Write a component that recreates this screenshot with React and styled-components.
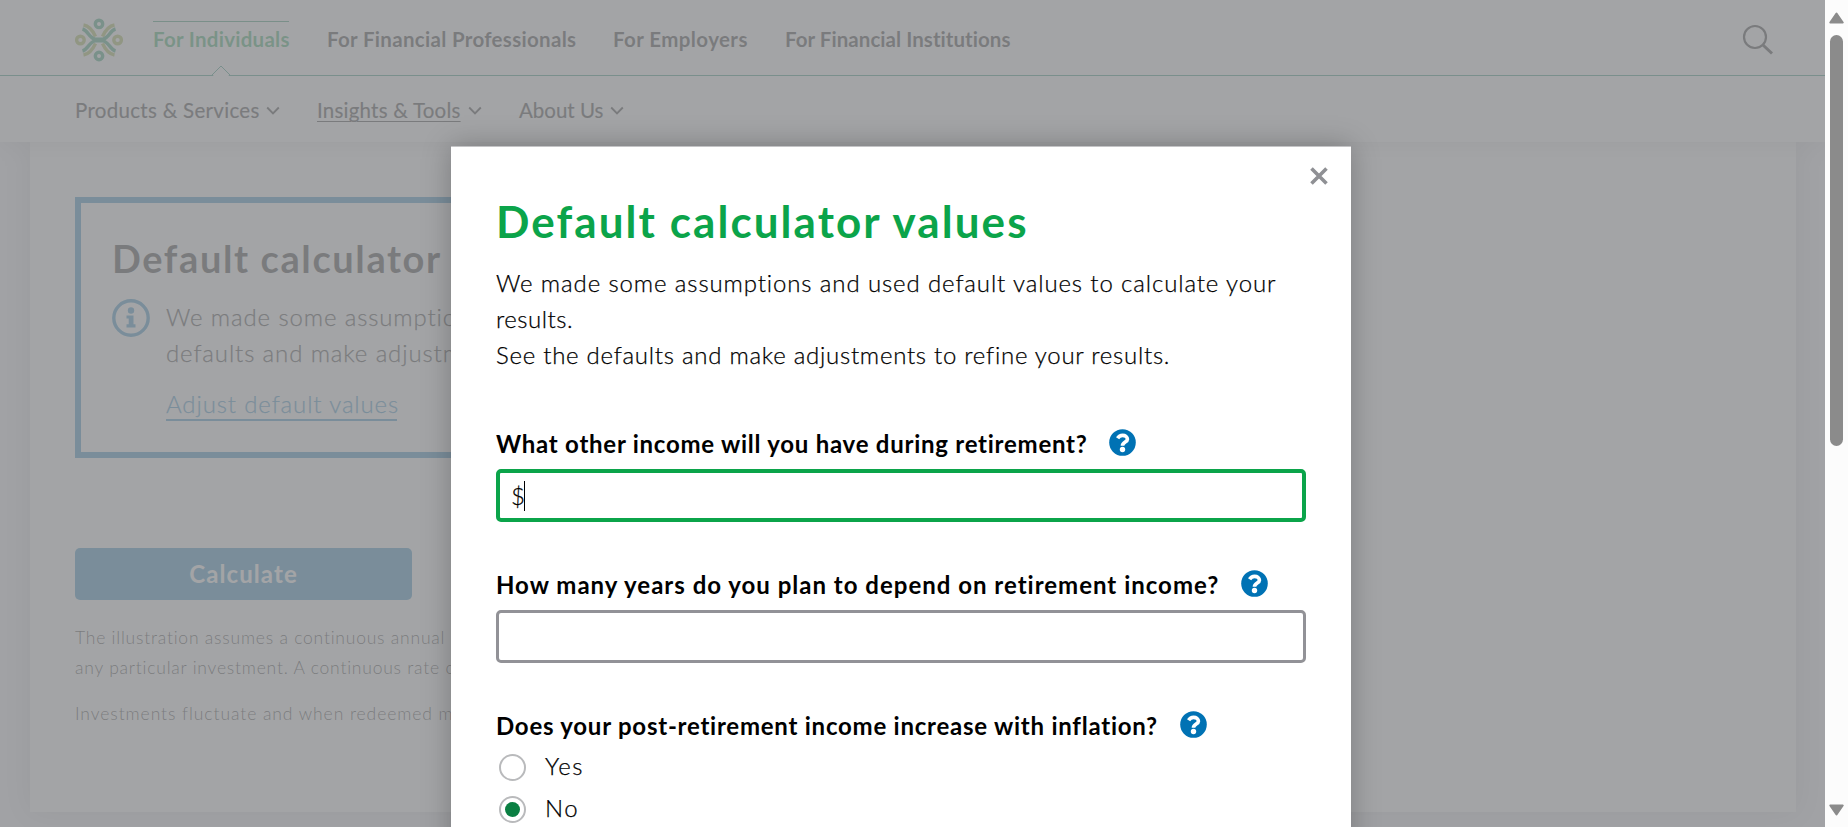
import React from 'react';
import styled, { createGlobalStyle, css } from 'styled-components';

const GlobalStyle = createGlobalStyle`
  * { box-sizing: border-box; }
  body {
    margin: 0;
    overflow: hidden;
    font-family: Lato, "Open Sans", sans-serif;
    color: #000;
  }
  h1, h2, p { margin: 0; }
`;

const bodyText = css`
  font-size: 24px;
  font-weight: 300;
  -webkit-text-stroke: 0.25px currentColor;
`;

const Screen = styled.div`
  display: flex;
  height: 827px;
  width: 1848px;
`;

const Viewport = styled.div`
  position: relative;
  width: 1825px;
  height: 827px;
  overflow: hidden;
  background: #f0f0f6;
`;

const Header = styled.header`
  position: relative;
  z-index: 1;
  height: 142px;
  background: #fff;
  box-shadow: 0 0 24px rgba(0, 0, 0, 0.2);
`;

const TopBar = styled.div`
  display: flex;
  align-items: flex-start;
  height: 76px;
  padding: 18px 51px 0 75px;
  border-bottom: 1px solid #007a5c;
`;

const LogoMark = styled.svg`
  width: 48px;
  height: 44px;
  margin-right: 30px;
`;

const TopLink = styled.a`
  position: relative;
  margin: 9px 38px 0 0;
  width: ${(p) => p.$width}px;
  white-space: nowrap;
  font-size: 20.5px;
  line-height: 24px;
  font-weight: 700;
  letter-spacing: ${(p) => p.$spacing}px;
`;

const ActiveTopLink = styled(TopLink)`
  margin-top: 3px;
  padding-top: 5px;
  border-top: 1px solid #007a4a;
  color: #00963f;
`;

const Notch = styled.svg`
  position: absolute;
  left: 58px;
  top: 43px;
  width: 20px;
  height: 12px;
`;

const SearchIcon = styled.svg`
  width: 32px;
  height: 32px;
  margin: 6px 0 0 auto;
`;

const SubNav = styled.nav`
  display: flex;
  padding: 20px 75px 0;
`;

const SubLink = styled.a`
  display: flex;
  align-items: center;
  width: ${(p) => p.$width}px;
  height: 28px;
  font-size: 20.5px;
  line-height: 28px;
  letter-spacing: ${(p) => p.$spacing}px;
  white-space: nowrap;
  -webkit-text-stroke: 0.2px currentColor;
`;

const SubLabel = styled.span`
  width: ${(p) => p.$width}px;
  text-decoration: ${(p) => (p.$active ? 'underline' : 'none')};
  text-decoration-thickness: 1px;
  text-underline-offset: 3px;
`;

const Chevron = styled.svg`
  width: 14px;
  height: 9px;
  margin-left: 7px;
`;

const Card = styled.main`
  width: 1766px;
  height: 670px;
  margin-left: 30px;
  padding: 55px 45px 0;
  background: #fff;
  box-shadow: 0 0 28px rgba(0, 0, 0, 0.2);
`;

const InfoBox = styled.section`
  width: 900px;
  height: 261px;
  padding: 31px 30px 0 31px;
  border: 6px solid #0072b4;
`;

const InfoTitle = styled.h2`
  font-size: 38px;
  line-height: 48px;
  font-weight: 700;
  letter-spacing: 1.6px;
  white-space: nowrap;
`;

const InfoRow = styled.div`
  display: flex;
  gap: 16px;
  margin-top: 17px;
`;

const InfoIcon = styled.svg`
  width: 38px;
  height: 38px;
`;

const InfoText = styled.div`
  ${bodyText}
  line-height: 36px;
  letter-spacing: 0.87px;
  white-space: nowrap;
`;

const AdjustLink = styled.a`
  display: block;
  margin-top: 15px;
  height: 35px;
  width: 231px;
  border-bottom: 2px solid #0072b4;
  color: #0072b4;
`;

const CalculateButton = styled.button`
  display: block;
  width: 337px;
  height: 52px;
  margin-top: 90px;
  padding: 0;
  border: 0;
  border-radius: 5px;
  background: #0072b4;
  color: #fff;
  font: 700 24px/52px Lato, sans-serif;
  letter-spacing: 1.1px;
`;

const Disclosure = styled.p`
  margin-top: ${(p) => p.$gap}px;
  font-size: 17.5px;
  line-height: 30px;
  font-weight: 300;
  letter-spacing: ${(p) => p.$spacing}px;
  white-space: nowrap;
`;

const Overlay = styled.div`
  position: absolute;
  inset: 0;
  z-index: 2;
  display: flex;
  align-items: flex-start;
  padding: 146px 0 0 451px;
  background: rgba(145, 147, 149, 0.84);
`;

const Dialog = styled.div`
  position: relative;
  flex: none;
  width: 900px;
  height: 900px;
  padding: 46px 45px 0;
  background: #fff;
  border-top: 1px solid #c4c4c6;
  box-shadow: 0 0 27px rgba(0, 0, 0, 0.25);
`;

const CloseIcon = styled.svg`
  position: absolute;
  top: 20px;
  right: 23px;
  width: 18px;
  height: 18px;
`;

const DialogTitle = styled.h1`
  font-size: 44px;
  line-height: 56px;
  font-weight: 700;
  letter-spacing: 2.07px;
  color: #0ba44a;
  white-space: nowrap;
`;

const Intro = styled.div`
  ${bodyText}
  margin: 16px 0 52px;
  line-height: 36px;
  white-space: nowrap;
`;

const IntroLine = styled.p`
  letter-spacing: ${(p) => p.$spacing}px;
`;

const Field = styled.div`
  margin-bottom: 44px;
`;

const FieldLabel = styled.div`
  display: flex;
  height: 36px;
  font-size: 24px;
  line-height: 36px;
  font-weight: 700;
  white-space: nowrap;
`;

const LabelText = styled.span`
  width: ${(p) => p.$width}px;
  padding-top: 1px;
  letter-spacing: ${(p) => p.$spacing}px;
`;

const HelpIcon = styled.svg`
  width: 27px;
  height: 27px;
  margin-top: 4px;
`;

const TextField = styled.div`
  ${bodyText}
  display: flex;
  align-items: center;
  width: 810px;
  height: 53px;
  margin-top: 8px;
  padding-left: 11px;
  border: ${(p) => (p.$focused ? '4px solid #0ba44a' : '3px solid #929297')};
  border-radius: 5px;
  line-height: 30px;
`;

const Amount = styled.span`
  letter-spacing: -1px;
`;

const Caret = styled.span`
  width: 1px;
  height: 30px;
  background: #000;
`;

const RadioRow = styled.div`
  ${bodyText}
  display: flex;
  align-items: center;
  height: 42px;
  padding-left: 3px;
  letter-spacing: 1.5px;
  line-height: 30px;
`;

const RadioList = styled.div`
  margin-top: 3px;
`;

const RadioCircle = styled.span`
  display: flex;
  align-items: center;
  justify-content: center;
  width: 27px;
  height: 27px;
  border: 2px solid #b9babc;
  border-radius: 50%;
`;

const RadioDot = styled.span`
  width: 15px;
  height: 15px;
  border-radius: 50%;
  background: #0a7f42;
`;

const RadioText = styled.span`
  padding: 0 0 3px 19px;
`;

const Scrollbar = styled.div`
  display: flex;
  flex-direction: column;
  align-items: center;
  width: 23px;
  height: 827px;
  padding: 12px 0 11px;
  background: #fcfcfc;
`;

const ScrollArrow = styled.svg`
  width: 15px;
  height: 12px;
`;

const ScrollThumb = styled.div`
  width: 13px;
  height: 411px;
  margin: 11px 0 auto;
  border-radius: 7px;
  background: #8b8b8b;
`;

function Logo() {
  return (
    <LogoMark viewBox="0 0 48 44" fill="none">
      <g stroke="#8fa82a" strokeWidth="3.4">
        <circle cx="5.4" cy="22" r="3.8" />
        <circle cx="42.6" cy="22" r="3.8" />
        <path d="M8.500 7C14 8 18 13 20.500 18.500M39.500 7C34 8 30 13 27.500 18.500M8.500 37C14 36 18 31 20.500 25.500M39.500 37C34 36 30 31 27.500 25.500" />
      </g>
      <g stroke="#008a52" strokeWidth="3.4">
        <circle cx="24" cy="5.900" r="3.700" />
        <circle cx="24" cy="38" r="3.700" />
        <path d="M7.500 11C13 12.500 14 20 20.500 21.300H27.500C34 20 35 12.500 40.500 11" />
        <path d="M7.500 33C13 31.500 14 24 20.500 22.700H27.500C34 24 35 31.500 40.500 33" />
      </g>
    </LogoMark>
  );
}

function ChevronDown() {
  return (
    <Chevron viewBox="0 0 14 9" fill="none" stroke="#000" strokeWidth="1.9">
      <path d="M1.200 1.500L7 7.300L12.800 1.500" />
    </Chevron>
  );
}

function Help() {
  return (
    <HelpIcon viewBox="0 0 27 27">
      <circle cx="13.500" cy="13.500" r="13.300" fill="#0072b4" />
      <path
        d="M8.600 9.300C9.900 7.100 11.700 6.400 13.600 6.400C16.200 6.400 18.400 7.800 18.400 10.200C18.400 13.200 13.500 12.900 13.500 16.800"
        fill="none"
        stroke="#fff"
        strokeWidth="3.700"
      />
      <circle cx="13.500" cy="20.500" r="2.700" fill="#fff" />
    </HelpIcon>
  );
}

function Question({ text, width, spacing }) {
  return (
    <FieldLabel>
      <LabelText $width={width} $spacing={spacing}>{text}</LabelText>
      <Help />
    </FieldLabel>
  );
}

export default function App() {
  return (
    <Screen>
      <GlobalStyle />
      <Viewport>
        <Header>
          <TopBar>
            <Logo />
            <ActiveTopLink $width={136} $spacing={0.27}>
              For Individuals
              <Notch viewBox="0 0 20 12">
                <path d="M1 12L10 1.500L19 12Z" fill="#fff" />
                <path d="M0.500 10.500L10 1L19.500 10.500" fill="none" stroke="#007a5c" />
              </Notch>
            </ActiveTopLink>
            <TopLink $width={248} $spacing={0.31}>For Financial Professionals</TopLink>
            <TopLink $width={134} $spacing={0.4}>For Employers</TopLink>
            <TopLink $width={225} $spacing={0.05}>For Financial Institutions</TopLink>
            <SearchIcon viewBox="0 0 32 32" fill="none" stroke="#000">
              <circle cx="13" cy="13" r="11" strokeWidth="2.200" />
              <path d="M21 21L30 29.500" strokeWidth="3" />
            </SearchIcon>
          </TopBar>
          <SubNav>
            <SubLink $width={242} $spacing={0.3}>
              <SubLabel $width={184}>Products &amp; Services</SubLabel>
              <ChevronDown />
            </SubLink>
            <SubLink $width={202} $spacing={0.22}>
              <SubLabel $width={144} $active>Insights &amp; Tools</SubLabel>
              <ChevronDown />
            </SubLink>
            <SubLink $width={110} $spacing={0}>
              <SubLabel $width={84}>About Us</SubLabel>
              <ChevronDown />
            </SubLink>
          </SubNav>
        </Header>
        <Card>
          <InfoBox>
            <InfoTitle>Default calculator</InfoTitle>
            <InfoRow>
              <InfoIcon viewBox="0 0 38 38">
                <circle cx="19" cy="19" r="17.200" fill="none" stroke="#0072b4" strokeWidth="3.400" />
                <circle cx="19" cy="11.500" r="3.200" fill="#0072b4" />
                <path d="M14.500 16.500H21.500V25.300H23.500V28.500H14.500V25.300H16.700V19.600H14.500Z" fill="#0072b4" />
              </InfoIcon>
              <InfoText>
                We made some assumptions<br />
                defaults and make adjustments
                <AdjustLink>Adjust default values</AdjustLink>
              </InfoText>
            </InfoRow>
          </InfoBox>
          <CalculateButton>Calculate</CalculateButton>
          <Disclosure $gap={23} $spacing={0.78}>
            The illustration assumes a continuous annual rate<br />
            any particular investment. A continuous rate of
          </Disclosure>
          <Disclosure $gap={16} $spacing={0.93}>Investments fluctuate and when redeemed may</Disclosure>
        </Card>
        <Overlay>
          <Dialog>
            <CloseIcon viewBox="0 0 18 18" stroke="#8f9094" strokeWidth="3.600">
              <path d="M1.500 1.500L16.500 16.500M16.500 1.500L1.500 16.500" />
            </CloseIcon>
            <DialogTitle>Default calculator values</DialogTitle>
            <Intro>
              <IntroLine $spacing={0.88}>We made some assumptions and used default values to calculate your</IntroLine>
              <IntroLine $spacing={0.5}>results.</IntroLine>
              <IntroLine $spacing={0.73}>See the defaults and make adjustments to refine your results.</IntroLine>
            </Intro>
            <Field>
              <Question text="What other income will you have during retirement?" width={613} spacing={0.75} />
              <TextField $focused><Amount>$</Amount><Caret /></TextField>
            </Field>
            <Field>
              <Question text="How many years do you plan to depend on retirement income?" width={745} spacing={1} />
              <TextField />
            </Field>
            <Field>
              <Question text="Does your post-retirement income increase with inflation?" width={684} spacing={0.76} />
              <RadioList>
                <RadioRow>
                  <RadioCircle />
                  <RadioText>Yes</RadioText>
                </RadioRow>
                <RadioRow>
                  <RadioCircle><RadioDot /></RadioCircle>
                  <RadioText>No</RadioText>
                </RadioRow>
              </RadioList>
            </Field>
          </Dialog>
        </Overlay>
      </Viewport>
      <Scrollbar>
        <ScrollArrow viewBox="0 0 15 12">
          <path d="M7.500 1.500L13.700 10.500H1.300Z" fill="#8b8b8b" stroke="#8b8b8b" strokeWidth="2" strokeLinejoin="round" />
        </ScrollArrow>
        <ScrollThumb />
        <ScrollArrow viewBox="0 0 15 12">
          <path d="M7.500 10.500L13.700 1.500H1.300Z" fill="#8b8b8b" stroke="#8b8b8b" strokeWidth="2" strokeLinejoin="round" />
        </ScrollArrow>
      </Scrollbar>
    </Screen>
  );
}
